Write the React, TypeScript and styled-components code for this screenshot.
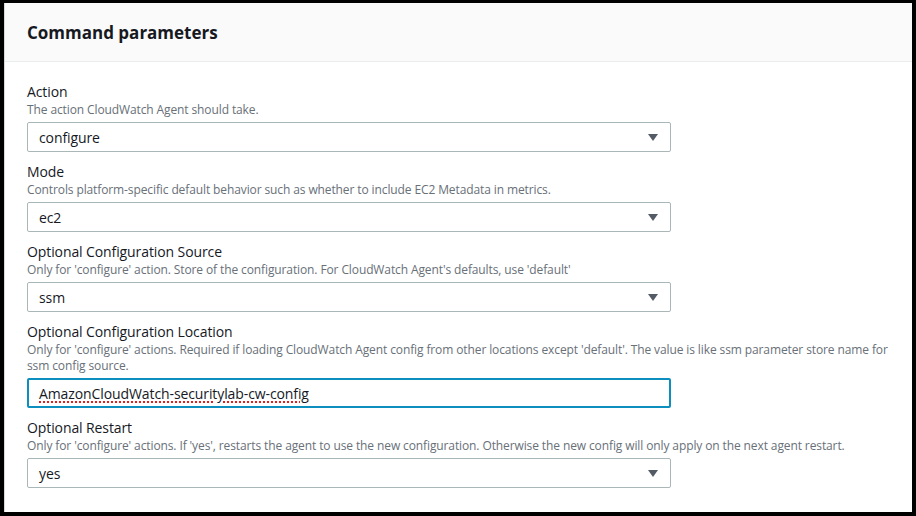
import React from "react";
import styled, { createGlobalStyle } from "styled-components";

const GlobalStyle = createGlobalStyle`
  html, body {
    margin: 0;
    padding: 0;
    background: #000;
  }
  * { box-sizing: border-box; }
`;

const Frame = styled.div`
  width: 916px;
  height: 516px;
  padding: 3px 4px 4px 4px;
  background: #000;
  font-family: "Open Sans", "Noto Sans", sans-serif;
`;

const Card = styled.section`
  height: 100%;
  background: #fff;
  border-left: 1px solid #d5dbdb;
  display: flex;
  flex-direction: column;
`;

const Header = styled.header`
  height: 59px;
  background: #fafafa;
  border-bottom: 1px solid #eaeded;
  display: flex;
  align-items: center;
  padding: 0 22px;
`;

const Title = styled.h2`
  margin: 1px 0 0;
  font-size: 17px;
  font-weight: 700;
  color: #16191f;
  line-height: 22px;
`;

const Body = styled.div`
  padding: 20px 22px;
  display: flex;
  flex-direction: column;
  gap: 10px;
`;

const Field = styled.div`
  display: flex;
  flex-direction: column;
`;

const Label = styled.div`
  font-size: 14px;
  line-height: 20px;
  letter-spacing: -0.1px;
  color: #16191f;
`;

const Description = styled.div`
  font-size: 12px;
  line-height: 16px;
  letter-spacing: -0.11px;
  color: #687078;
`;

const Control = styled.div<{ $focused?: boolean }>`
  margin-top: 4px;
  width: 644px;
  height: 30px;
  border: ${(p) => (p.$focused ? "2px solid #0c8fbf" : "1px solid #aab7b8")};
  border-radius: 2px;
  padding: ${(p) => (p.$focused ? "0 11px 0 10px" : "0 12px 0 11px")};
  display: flex;
  align-items: center;
  justify-content: space-between;
  font-size: 14px;
  letter-spacing: -0.1px;
  color: #16191f;
  background: #fff;
`;

const Value = styled.span<{ $misspelled?: boolean }>`
  ${(p) =>
    p.$misspelled
      ? `text-decoration: underline dotted #e02020; text-decoration-thickness: 2px; text-underline-offset: 3px;`
      : ""}
`;

const Caret = () => (
  <svg width="10" height="7" viewBox="0 0 10 7" aria-hidden="true">
    <path d="M0 0 H10 L5 7 Z" fill="#545b64" />
  </svg>
);

type FieldDef = {
  label: string;
  description: string;
  value: string;
  kind: "select" | "input";
};

const fields: FieldDef[] = [
  {
    label: "Action",
    description: "The action CloudWatch Agent should take.",
    value: "configure",
    kind: "select",
  },
  {
    label: "Mode",
    description:
      "Controls platform-specific default behavior such as whether to include EC2 Metadata in metrics.",
    value: "ec2",
    kind: "select",
  },
  {
    label: "Optional Configuration Source",
    description:
      "Only for 'configure' action. Store of the configuration. For CloudWatch Agent's defaults, use 'default'",
    value: "ssm",
    kind: "select",
  },
  {
    label: "Optional Configuration Location",
    description:
      "Only for 'configure' actions. Required if loading CloudWatch Agent config from other locations except 'default'. The value is like ssm parameter store name for ssm config source.",
    value: "AmazonCloudWatch-securitylab-cw-config",
    kind: "input",
  },
  {
    label: "Optional Restart",
    description:
      "Only for 'configure' actions. If 'yes', restarts the agent to use the new configuration. Otherwise the new config will only apply on the next agent restart.",
    value: "yes",
    kind: "select",
  },
];

export default function App() {
  return (
    <>
      <GlobalStyle />
      <Frame>
        <Card>
          <Header>
            <Title>Command parameters</Title>
          </Header>
          <Body>
            {fields.map((f) => (
              <Field key={f.label}>
                <Label>{f.label}</Label>
                <Description>{f.description}</Description>
                <Control $focused={f.kind === "input"}>
                  <Value $misspelled={f.kind === "input"}>{f.value}</Value>
                  {f.kind === "select" && <Caret />}
                </Control>
              </Field>
            ))}
          </Body>
        </Card>
      </Frame>
    </>
  );
}
